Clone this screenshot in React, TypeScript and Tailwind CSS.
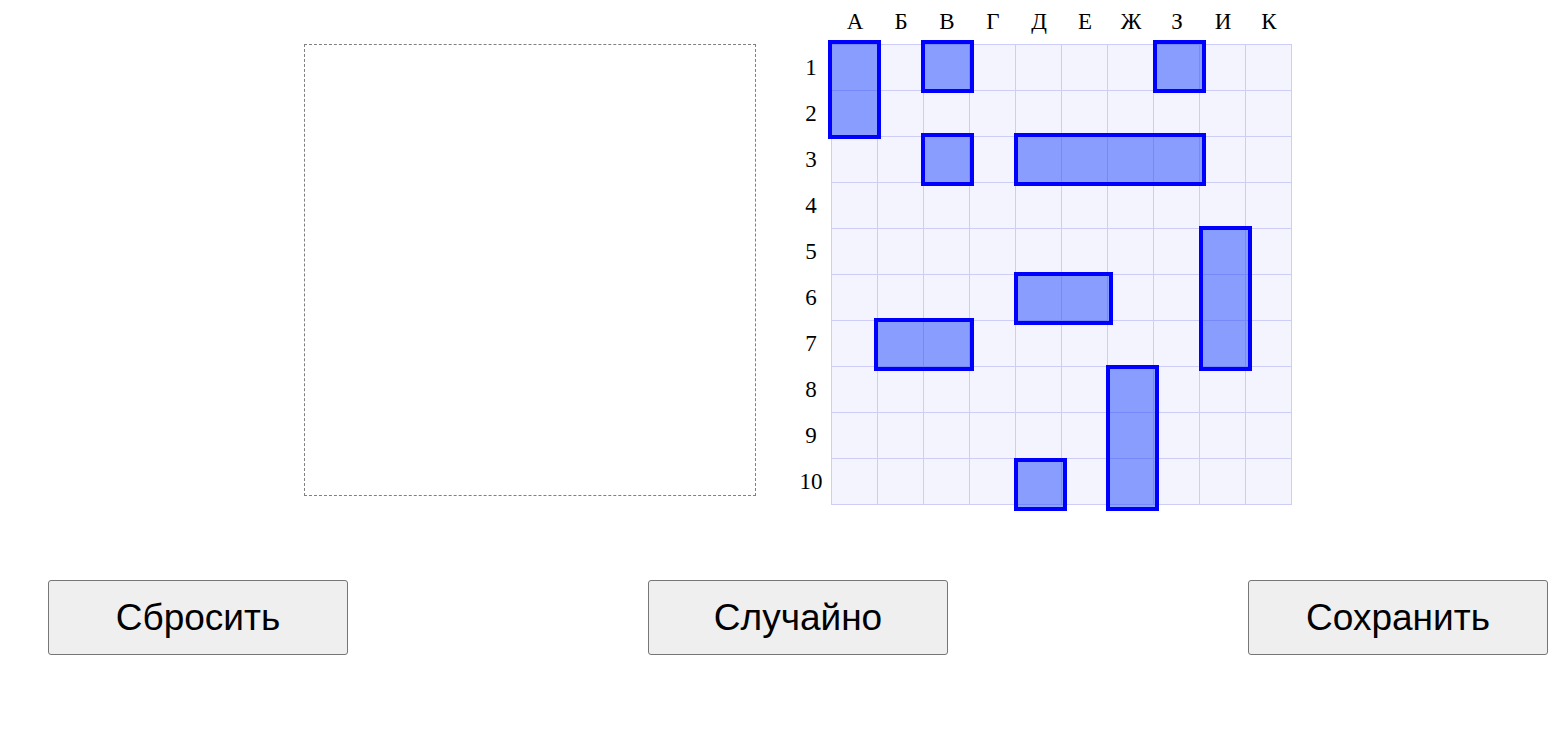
import React from "react";

const COLS = ["А", "Б", "В", "Г", "Д", "Е", "Ж", "З", "И", "К"];
const ROWS = [1, 2, 3, 4, 5, 6, 7, 8, 9, 10];

// col, row, length, vertical
const SHIPS: [number, number, number, boolean][] = [
    [0, 0, 2, true],
    [2, 0, 1, false],
    [7, 0, 1, false],
    [2, 2, 1, false],
    [4, 2, 4, false],
    [8, 4, 3, true],
    [4, 5, 2, false],
    [1, 6, 2, false],
    [6, 7, 3, true],
    [4, 9, 1, false],
];

const STEP = 46.4;

function Board() {
    return (
        <div className="ml-[35px] flex flex-col" style={{ fontFamily: '"Liberation Serif", serif' }}>
            <div className="flex h-[44px] pl-[41px]">
                {COLS.map((c) => (
                    <div key={c} className="w-[46px] flex items-center justify-center text-[23px] text-black">
                        {c}
                    </div>
                ))}
            </div>
            <div className="flex">
                <div className="w-[40px] flex flex-col pt-[1px]">
                    {ROWS.map((r) => (
                        <div key={r} className="h-[46px] flex items-center justify-center text-[23px] text-black">
                            {r}
                        </div>
                    ))}
                </div>
                <div className="relative border-l border-t border-[#cdcdf7] bg-[#f4f4fe]">
                    <div className="grid grid-cols-[repeat(10,46px)]">
                        {Array.from({ length: 100 }).map((_, i) => (
                            <div key={i} className="h-[46px] border-r border-b border-[#cdcdf7]" />
                        ))}
                    </div>
                    {SHIPS.map(([c, r, len, vert], i) => (
                        <div
                            key={i}
                            className="absolute border-4 border-[#0000ff] bg-[rgba(30,70,255,0.5)]"
                            style={{
                                left: -4 + STEP * c,
                                top: -5 + STEP * r,
                                width: (vert ? STEP : STEP * len) + 6.6,
                                height: (vert ? STEP * len : STEP) + 6.6,
                            }}
                        />
                    ))}
                </div>
            </div>
        </div>
    );
}

export default function App() {
    return (
        <div className="w-full h-[738px] bg-white" style={{ fontFamily: '"Liberation Sans", Arial, sans-serif' }}>
            <div className="flex pl-[304px]">
                <div className="mt-[44px] w-[452px] h-[452px] border border-dashed border-[#808080]" />
                <Board />
            </div>
            <div className="flex pl-[48px] gap-[300px] mt-[75px]">
                {["Сбросить", "Случайно", "Сохранить"].map((t) => (
                    <button
                        key={t}
                        className="w-[300px] h-[75px] bg-[#efefef] border border-[#767676] rounded-[3px] text-[37px] text-black"
                    >
                        {t}
                    </button>
                ))}
            </div>
        </div>
    );
}
